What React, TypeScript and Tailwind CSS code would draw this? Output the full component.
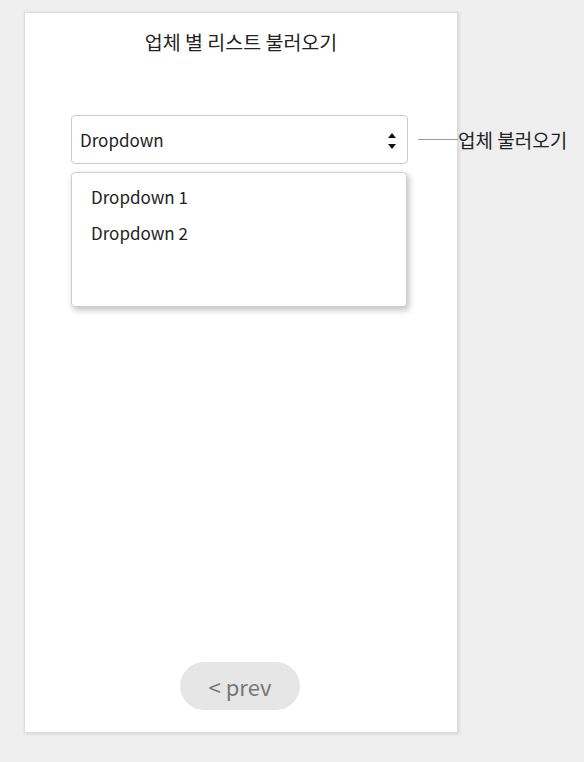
import React from 'react';

const font = { fontFamily: '"Noto Sans CJK KR", "Noto Sans", sans-serif' };

export default function App() {
  return (
    <div className="min-h-[762px] w-[584px] bg-[#efefef] pt-[12px] pl-[24px]" style={font}>
      <div className="relative flex h-[721px] w-[434px] flex-col border border-[#dcdcdc] bg-white shadow-[1px_1px_3px_rgba(0,0,0,0.12)]">
        <h1 className="pt-[15px] text-center text-[19.5px] leading-[27px] text-[#222]">업체 별 리스트 불러오기</h1>

        <div className="ml-[46px] mt-[60px] w-[337px]">
          <div className="relative flex h-[49px] items-center rounded-[4px] border border-[#cccccc] bg-white pl-[8px] pr-[10px]">
            <span className="text-[17px] text-[#222]">Dropdown</span>
            <svg className="ml-auto" width="10" height="20" viewBox="0 0 10 20">
              <path d="M1 8 L5 3 L9 8 Z" fill="#111" />
              <path d="M1 14 L5 19 L9 14 Z" fill="#111" />
            </svg>
            {/* annotation */}
            <div className="absolute left-[346px] top-[10px] flex items-center">
              <div className="h-px w-[40px] bg-[#9a9a9a]" />
              <span className="whitespace-nowrap text-[19px] leading-[27px] text-[#222]">업체 불러오기</span>
            </div>
          </div>

          <div className="mt-[8px] flex h-[135px] w-[336px] flex-col gap-[11px] rounded-[4px] border border-[#cfcfcf] bg-white px-[19px] pt-[11px] shadow-[2px_3px_6px_rgba(0,0,0,0.25)]">
            <div className="text-[17px] leading-[25px] text-[#222]">Dropdown 1</div>
            <div className="text-[17px] leading-[25px] text-[#222]">Dropdown 2</div>
          </div>
        </div>

        <div className="mt-auto flex justify-center pb-[22px]">
          <button className="ml-[-2px] h-[48px] w-[120px] rounded-full bg-[#e6e6e6] text-[22px] text-[#777]">&lt; prev</button>
        </div>
      </div>
    </div>
  );
}
